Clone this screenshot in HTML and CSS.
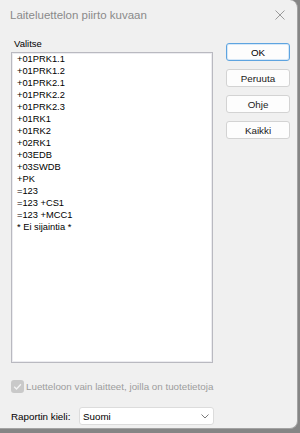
FILE: index.html
```html
<!DOCTYPE html>
<html lang="fi">
<head>
    <meta charset="UTF-8">
    <meta name="viewport" content="width=device-width, initial-scale=1.0">
    <title>Laiteluettelon piirto kuvaan</title>
    <link rel="stylesheet" href="styles.css">
</head>
<body>
<div class="dialog">
    <div class="titlebar">
        <span class="title">Laiteluettelon piirto kuvaan</span>
        <svg class="close" width="10" height="10" viewBox="0 0 10 10">
            <path d="M0.5 0.5 L9.5 9.5 M9.5 0.5 L0.5 9.5" stroke="#9a9a9a" stroke-width="1" fill="none"/>
        </svg>
    </div>
    <div class="content">
        <div class="main-row">
            <div class="pick">
                <div class="label">Valitse</div>
                <ul class="listbox">
                    <li>+01PRK1.1</li>
                    <li>+01PRK1.2</li>
                    <li>+01PRK2.1</li>
                    <li>+01PRK2.2</li>
                    <li>+01PRK2.3</li>
                    <li>+01RK1</li>
                    <li>+01RK2</li>
                    <li>+02RK1</li>
                    <li>+03EDB</li>
                    <li>+03SWDB</li>
                    <li>+PK</li>
                    <li>=123</li>
                    <li>=123 +CS1</li>
                    <li>=123 +MCC1</li>
                    <li>* Ei sijaintia *</li>
                </ul>
            </div>
            <div class="buttons">
                <button class="btn btn-default">OK</button>
                <button class="btn">Peruuta</button>
                <button class="btn">Ohje</button>
                <button class="btn">Kaikki</button>
            </div>
        </div>
        <div class="check-row">
            <svg class="checkbox" width="13" height="13" viewBox="0 0 13 13">
                <rect x="0" y="0" width="13" height="13" rx="3" fill="#c9c9c9"/>
                <path d="M3.2 6.8 L5.5 9 L9.9 4.2" stroke="#f4f4f4" stroke-width="1.3" fill="none"/>
            </svg>
            <span class="check-text">Luetteloon vain laitteet, joilla on tuotetietoja</span>
        </div>
        <div class="lang-row">
            <span class="lang-label">Raportin kieli:</span>
            <div class="select">
                <span>Suomi</span>
                <svg width="8" height="5" viewBox="0 0 8 5">
                    <path d="M0.5 0.5 L4 4 L7.5 0.5" stroke="#7a7a7a" stroke-width="1" fill="none"/>
                </svg>
            </div>
        </div>
    </div>
</div>
</body>
</html>
```

FILE: styles.css
```css
/* General Styles */
body {
    margin: 0;
    padding: 0;
    background: #858585;
    font-family: 'Liberation Sans', Arial, sans-serif;
    font-size: 9.8px;
    color: #000;
}

/* Dialog window */
.dialog {
    width: 297px;
    height: 428px;
    background: #f0f0f0;
    border: 1px solid #a3a3a3;
    border-top: none;
    border-left: none;
    border-radius: 0 8px 8px 0;
    display: flex;
    flex-direction: column;
}

.titlebar {
    height: 30px;
    display: flex;
    align-items: center;
    justify-content: space-between;
    padding: 0 11px 2px 10px;
}

.title {
    font-size: 11.5px;
    color: #8a8a8a;
}

.close {
    margin-right: 1px;
}

.content {
    padding: 6px 0 0 11px;
}

/* Selection list and buttons */
.main-row {
    display: flex;
}

.pick {
    width: 202px;
}

.label {
    font-size: 9.5px;
    line-height: 12px;
    margin-bottom: 2px;
    padding-left: 3px;
}

.listbox {
    list-style: none;
    margin: 0;
    padding: 0 0 0 5px;
    height: 309px;
    font-size: 9.3px;
    background: #fff;
    border: 1px solid #b9b9c0;
    box-shadow: inset 0 0 0 1px #ececf0;
}

.listbox li {
    line-height: 12px;
    height: 12px;
    white-space: nowrap;
}

.buttons {
    margin-left: 13px;
    padding-top: 5px;
    display: flex;
    flex-direction: column;
    gap: 8px;
}

.btn {
    width: 64px;
    height: 18px;
    padding: 0;
    font-family: 'Liberation Sans', Arial, sans-serif;
    font-size: 9.8px;
    color: #1a1a1a;
    background: #fdfdfd;
    border: 1px solid #d3d3d3;
    border-radius: 3px;
}

.btn-default {
    border: 1px solid #5ea4e0;
    box-shadow: inset 0 0 0 1px #d6e8f8;
    color: #000;
}

/* Checkbox */
.check-row {
    margin-top: 17px;
    height: 13px;
    display: flex;
    align-items: center;
    gap: 2px;
}

.check-text {
    color: #9d9d9d;
}

/* Report language */
.lang-row {
    margin-top: 14px;
    display: flex;
    align-items: center;
}

.lang-label {
    width: 68px;
}

.select {
    width: 126px;
    height: 16px;
    padding: 0 4px 0 3px;
    display: flex;
    align-items: center;
    justify-content: space-between;
    background: #fff;
    border: 1px solid #dcdcdc;
    border-radius: 3px;
}
```
